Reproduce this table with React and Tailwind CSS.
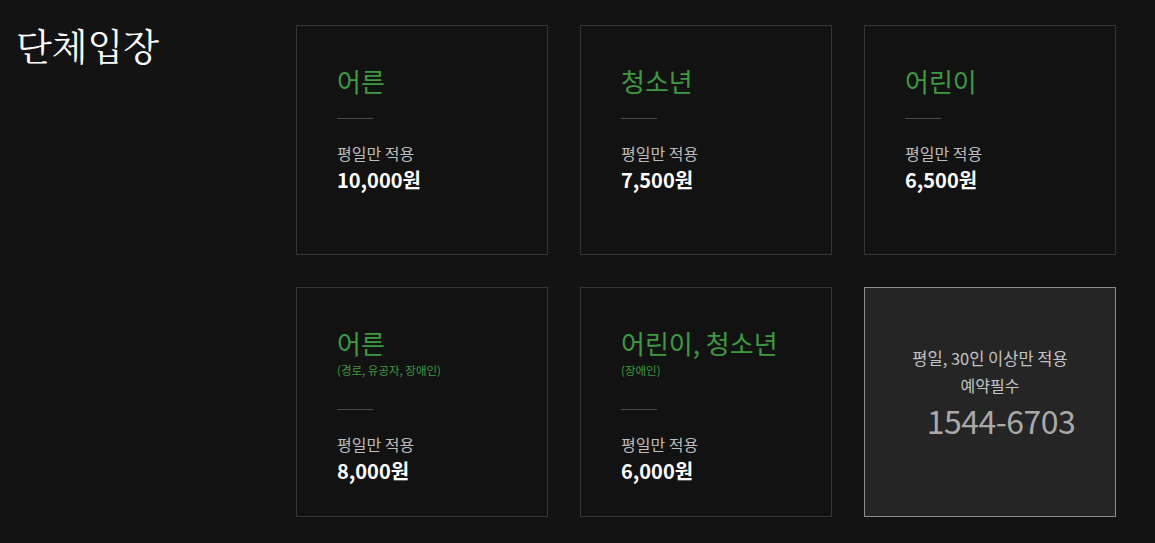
const kr = { fontFamily: '"Noto Sans CJK KR", "Noto Sans", sans-serif' };

const cards = [
  { name: '어른', price: '10,000원' },
  { name: '청소년', price: '7,500원' },
  { name: '어린이', price: '6,500원' },
  { name: '어른', sub: '(경로, 유공자, 장애인)', price: '8,000원' },
  { name: '어린이, 청소년', sub: '(장애인)', price: '6,000원' },
];

function PriceCard({ name, sub, price }) {
  return (
    <div className="h-[230px] border border-[#363636] bg-[#121212] pl-[40px] pt-[38px]">
      <div className="text-[26px] leading-[34px] text-[#3c9a3f]">{name}</div>
      {sub && <div className="mt-[2px] text-[11.5px] leading-[16px] text-[#3c9a3f]">{sub}</div>}
      <div className={`${sub ? 'mt-[31px]' : 'mt-[20px]'} h-px w-[36px] bg-[#4a4a4a]`} />
      <div className="mt-[23px] text-[16px] leading-[22px] text-[#bdbdbd]">평일만 적용</div>
      <div className="mt-[3px] text-[20px] font-bold leading-[26px] text-white">{price}</div>
    </div>
  );
}

export default function App() {
  return (
    <div className="min-h-screen bg-[#131313]" style={kr}>
      <div className="flex pt-[25px]">
        <div className="w-[296px] shrink-0 pl-[16px]">
          <h1
            className="text-[37px] leading-[40px] text-white"
            style={{ fontFamily: '"Noto Serif CJK KR", "Liberation Serif", serif' }}
          >
            단체입장
          </h1>
        </div>
        <div className="grid grid-cols-[252px_252px_252px] gap-[32px]">
          {cards.map((c, i) => (
            <PriceCard key={i} {...c} />
          ))}
          <div className="flex h-[230px] flex-col items-center justify-center border border-[#8c8c8c] bg-[#252525] pb-[20px]">
            <div className="text-[16.5px] leading-[27px] text-[#c4c4c4]">평일, 30인 이상만 적용</div>
            <div className="text-[16px] leading-[27px] text-[#c4c4c4]">예약필수</div>
            <div className="mt-[1px] pl-[22px] text-[32px] leading-[40px] tracking-[-0.5px] text-[#a9a9a9]">1544-6703</div>
          </div>
        </div>
      </div>
    </div>
  );
}
